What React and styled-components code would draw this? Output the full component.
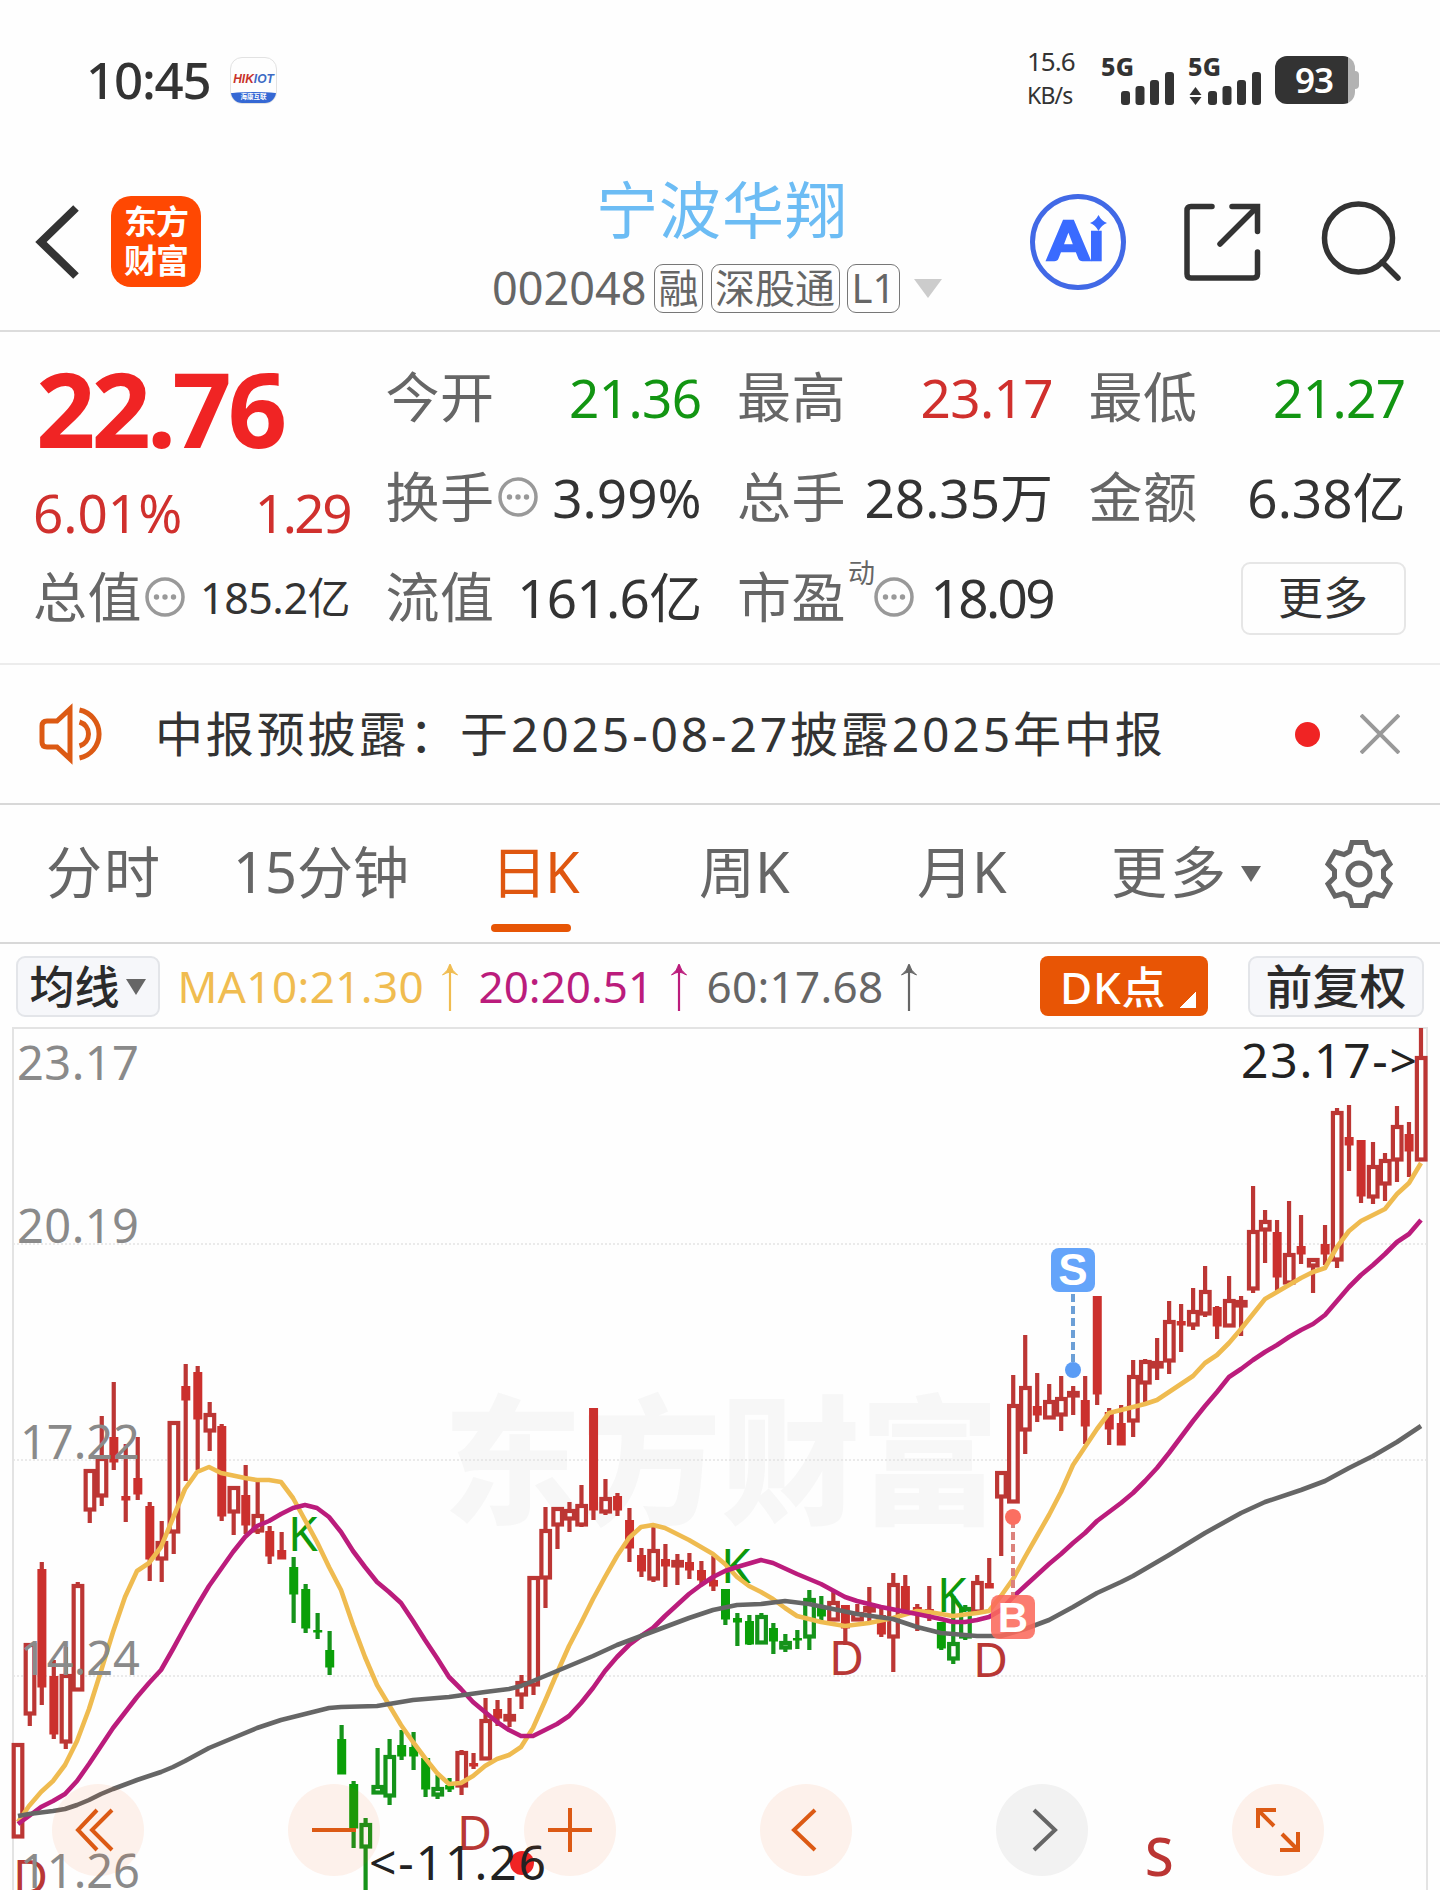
import styled, { createGlobalStyle } from "styled-components"

const GlobalStyle = createGlobalStyle`
    * {
        box-sizing: border-box;
    }

    body {
        margin: 0;
        background-color: #fefefe;
        font-family: "Noto Sans", "Noto Sans CJK SC", sans-serif;
        color: #333;
    }
`

const Page = styled.div`
    width: 1440px;
    height: 1890px;
    overflow: hidden;
    background-color: #fefefe;
`

/* ---------- status bar ---------- */

const StatusBar = styled.div`
    height: 160px;
    padding: 0 81px 0 86px;
    display: flex;
    align-items: center;
`

const Clock = styled.div`
    width: 144px;
    margin-top: -2px;
    font-size: 51px;
    font-weight: 500;
    letter-spacing: -1.2px;
    line-height: 60px;
`

const HikApp = styled.div`
    width: 47px;
    height: 47px;
    border: 1px solid #e2e2e2;
    border-radius: 12px;
    overflow: hidden;
    display: flex;
    flex-direction: column;
    justify-content: space-between;
    align-items: center;
`

const HikName = styled.div`
    margin-top: 13px;
    font-size: 12px;
    line-height: 16px;
    font-weight: 700;
    font-style: italic;
    font-family: "Liberation Sans", sans-serif;
    color: #c8322a;

    span {
        color: #3d6ac4;
    }
`

const HikFoot = styled.div`
    width: 60px;
    height: 11px;
    border-radius: 50% 50% 0 0 / 3px 3px 0 0;
    background-color: #3568d4;
    color: white;
    font-size: 6.5px;
    line-height: 10px;
    font-weight: 700;
    text-align: center;
`

const NetSpeed = styled.div`
    margin-left: auto;
    margin-top: -4px;
    width: 74px;
    font-size: 26px;
    line-height: 34px;
    letter-spacing: -1px;

    div + div {
        font-size: 23px;
        letter-spacing: -0.8px;
    }
`

const Signal = styled.svg`
    width: 76px;
    height: 56px;
    margin-right: ${({ $gap }) => $gap}px;
    overflow: visible;
`

const Battery = styled.div`
    width: 80px;
    height: 48px;
    border-radius: 12px;
    background: linear-gradient(to right, #333 73px, #b2b2b2 73px);
    color: white;
    font-size: 35px;
    font-weight: 600;
    line-height: 47px;
    padding-left: 20px;
    letter-spacing: -1px;
`

const BatteryTip = styled.div`
    width: 4px;
    height: 18px;
    border-radius: 0 4px 4px 0;
    background-color: #b2b2b2;
`

/* ---------- title bar ---------- */

const TitleBar = styled.header`
    height: 172px;
    border-bottom: 2px solid #dcdcdc;
    display: grid;
    grid-template-columns: 300px 1fr 440px;
`

const TitleSide = styled.div`
    padding-left: ${({ $left }) => $left}px;
    padding-top: 32px;
    display: flex;
    align-items: flex-start;

    svg {
        flex: none;
    }
`

const EastLogo = styled.div`
    width: 90px;
    height: 91px;
    margin: 4px 0 0 31px;
    border-radius: 20px;
    background-color: #ff4802;
    color: white;
    font-size: 33px;
    font-weight: 700;
    line-height: 39px;
    letter-spacing: -1px;
    text-align: center;
    padding-top: 6px;
`

const TitleMiddle = styled.div`
    display: flex;
    flex-direction: column;
    padding-left: 192px;
`

const StockName = styled.h1`
    margin: 13px 0 0 104px;
    font-size: 62px;
    line-height: 74px;
    font-weight: 400;
    letter-spacing: 1px;
    color: #6cbcf4;
`

const StockMeta = styled.div`
    margin-top: 16px;
    display: flex;
    align-items: center;
    color: #666;
    white-space: nowrap;
`

const Code = styled.div`
    width: 162px;
    font-size: 45px;
    line-height: 50px;
`

const Tag = styled.div`
    width: ${({ $width }) => $width}px;
    height: 49px;
    margin-right: 7.5px;
    border: 1.5px solid #777;
    border-radius: 9px;
    font-size: 40px;
    line-height: 46px;
    text-align: center;
`

const Triangle = styled.i`
    width: 0;
    height: 0;
    margin-left: ${({ $left }) => $left || 0}px;
    border-left: ${({ $w }) => $w / 2}px solid transparent;
    border-right: ${({ $w }) => $w / 2}px solid transparent;
    border-top: ${({ $h }) => $h}px solid ${({ $color }) => $color};
`

/* ---------- quote ---------- */

const Quote = styled.section`
    height: 333px;
    padding: 15px 31px 0 33px;
    border-bottom: 2px solid #ececec;
    display: grid;
    grid-template-columns: 317px 316px 316px 317px;
    grid-template-rows: 100px 100px 100px;
    column-gap: 35.5px;
`

const PriceCell = styled.div`
    grid-row: span 2;
    color: #d0302d;
`

const Price = styled.div`
    height: 120px;
    padding-left: 3px;
    font-size: 104px;
    line-height: 121px;
    font-weight: 700;
    letter-spacing: -4px;
    color: #f02424;
`

const PriceChange = styled.div`
    display: flex;
    justify-content: space-between;
    font-size: 53px;
    line-height: 92px;

    span + span {
        letter-spacing: -2.5px;
    }
`

const Cell = styled.div`
    display: flex;
    align-items: center;
    white-space: nowrap;
    line-height: 99px;
`

const Label = styled.div`
    font-size: 54px;
    letter-spacing: 0.5px;
    color: #666;
`

const Value = styled.div`
    margin-left: auto;
    font-size: ${({ $small }) => ($small ? 43 : 53)}px;
    letter-spacing: ${({ $ls }) => $ls || 0}px;
    color: ${({ $tone }) => ($tone === "up" ? "#d0302d" : $tone === "down" ? "#129512" : "#333")};
`

const Dynamic = styled.sup`
    align-self: flex-start;
    margin: 11px -4px 0 2px;
    font-size: 27px;
    line-height: 30px;
    color: #666;
`

const MoreButton = styled.button`
    margin-left: auto;
    margin-top: 3px;
    width: 165px;
    height: 73px;
    border: 2px solid #e6e6e6;
    border-radius: 9px;
    background: none;
    font-family: inherit;
    font-size: 45px;
    line-height: 60px;
    color: #333;
    padding: 0 0 2px;
`

const Dots = styled.svg`
    width: 40px;
    height: 40px;
    margin-left: 3px;
    flex: none;
`

/* ---------- notice ---------- */

const Notice = styled.section`
    height: 140px;
    padding: 0 40px 0 38px;
    border-bottom: 2px solid #d8d8d8;
    display: flex;
    align-items: center;
`

const NoticeText = styled.div`
    margin-left: 45px;
    font-size: 48px;
    line-height: 70px;
    letter-spacing: 2.85px;
    white-space: nowrap;
`

const RedDot = styled.div`
    width: 25px;
    height: 25px;
    margin-left: auto;
    margin-right: 40px;
    border-radius: 50%;
    background-color: #f02424;
`

/* ---------- tabs ---------- */

const Tabs = styled.nav`
    height: 139px;
    border-bottom: 2px solid #d8d8d8;
    display: grid;
    grid-template-columns: 233px 258px 208px 218px 194px 212px 1fr;
`

const Tab = styled.div`
    position: relative;
    padding-left: ${({ $left }) => $left || 0}px;
    display: flex;
    align-items: center;
    font-size: 56px;
    line-height: 130px;
    height: 132px;
    letter-spacing: ${({ $ls }) => $ls || 0}px;
    color: ${({ $active }) => ($active ? "#df5710" : "#666")};
    white-space: nowrap;

    &::after {
        content: "";
        display: ${({ $active }) => ($active ? "block" : "none")};
        position: absolute;
        left: 0;
        top: 119px;
        width: 80px;
        height: 8px;
        border-radius: 4px;
        background-color: #e75505;
    }

    i {
        margin-left: 12px;
        margin-top: 5px;
    }

    svg {
        margin-top: 6px;
    }
`

/* ---------- average line legend ---------- */

const Legend = styled.div`
    height: 83px;
    padding: 12px 16px 0 15.5px;
    display: flex;
    align-items: flex-start;
    white-space: nowrap;
`

const GreyButton = styled.div`
    width: ${({ $width }) => $width}px;
    height: 61px;
    border: 2px solid #e3e5e9;
    border-radius: 9px;
    background-color: #f6f7fa;
    font-size: ${({ $size }) => $size}px;
    font-weight: 500;
    line-height: 55px;
    color: #2b2b2b;
    display: flex;
    align-items: center;
    justify-content: center;

    i {
        margin-left: 6px;
    }
`

const Average = styled.div`
    width: ${({ $width }) => $width}px;
    display: flex;
    justify-content: space-between;
    margin-left: ${({ $left }) => $left}px;
    font-size: 44px;
    line-height: 61px;
    letter-spacing: ${({ $ls }) => $ls || 0}px;
    color: ${({ $color }) => $color};

    svg {
        margin-top: 6px;
    }
`

const DkButton = styled.div`
    width: 168px;
    height: 60px;
    margin-left: auto;
    margin-right: 40px;
    border-radius: 8px;
    background-color: #e85505;
    color: white;
    font-size: 44px;
    font-weight: 500;
    line-height: 58px;
    letter-spacing: 0.8px;
    padding-left: 20px;
    display: flex;
    align-items: flex-end;
`

const Corner = styled.i`
    width: 16px;
    height: 16px;
    margin: 0 0 8px 14px;
    background: linear-gradient(135deg, transparent 50%, white 50%);
`

/* ---------- chart ---------- */

const ChartBox = styled.div`
    position: relative;
    height: 863px;

    > svg {
        display: block;
    }
`

const ChartTools = styled.div`
    position: absolute;
    left: 52px;
    right: 116px;
    bottom: 14px;
    display: flex;
    justify-content: space-between;
`

const RoundTool = styled.div`
    width: 92px;
    height: 92px;
    border-radius: 50%;
    background-color: ${({ $grey }) => ($grey ? "#f2f2f2" : "rgba(243, 95, 10, 0.08)")};
    color: ${({ $grey }) => ($grey ? "#666" : "#dc5a14")};

    svg {
        display: block;
    }
`

// kind, body top, body bottom, high, low
// h: hollow, f: filled, capital letter: green
const candles = [
    ["h", 1743, 1838, 1743, 1838], ["h", 1643, 1715, 1643, 1726], ["f", 1569, 1687, 1562, 1705],
    ["f", 1676, 1734, 1660, 1739], ["h", 1674, 1743, 1647, 1749], ["h", 1584, 1691, 1582, 1691],
    ["h", 1469, 1511, 1469, 1523], ["h", 1457, 1497, 1416, 1506], ["f", 1437, 1462, 1382, 1470],
    ["f", 1496, 1500, 1444, 1522], ["f", 1478, 1494, 1437, 1500], ["f", 1506, 1559, 1502, 1581],
    ["h", 1541, 1560, 1521, 1582], ["h", 1421, 1533, 1421, 1554], ["f", 1386, 1400, 1364, 1481],
    ["f", 1372, 1419, 1366, 1470], ["h", 1413, 1432, 1402, 1451], ["f", 1426, 1516, 1424, 1521],
    ["h", 1486, 1513, 1486, 1535], ["f", 1495, 1525, 1465, 1534], ["h", 1514, 1532, 1482, 1534],
    ["f", 1531, 1556, 1526, 1564], ["f", 1550, 1559, 1532, 1559], ["F", 1567, 1594, 1557, 1623],
    ["F", 1589, 1628, 1584, 1633], ["F", 1630, 1632, 1613, 1639], ["F", 1650, 1667, 1631, 1675],
    ["F", 1739, 1774, 1725, 1774], ["F", 1784, 1828, 1781, 1848], ["H", 1823, 1848, 1818, 1892],
    ["H", 1785, 1794, 1748, 1794], ["H", 1755, 1797, 1739, 1805], ["F", 1745, 1756, 1730, 1760],
    ["F", 1747, 1756, 1732, 1770], ["F", 1758, 1789, 1758, 1797], ["H", 1787, 1796, 1775, 1799],
    ["F", 1785, 1789, 1778, 1792], ["h", 1751, 1787, 1750, 1795], ["f", 1763, 1766, 1753, 1769],
    ["h", 1719, 1760, 1698, 1760], ["f", 1709, 1718, 1700, 1726], ["h", 1714, 1721, 1698, 1727],
    ["h", 1681, 1696, 1675, 1709], ["h", 1576, 1686, 1576, 1695], ["h", 1529, 1579, 1507, 1608],
    ["h", 1507, 1526, 1507, 1549], ["h", 1509, 1520, 1502, 1532], ["h", 1504, 1526, 1485, 1527],
    ["f", 1408, 1510, 1408, 1520], ["h", 1497, 1513, 1479, 1515], ["f", 1496, 1510, 1493, 1516],
    ["f", 1520, 1548, 1508, 1562], ["f", 1555, 1571, 1548, 1577], ["h", 1549, 1580, 1527, 1582],
    ["f", 1559, 1566, 1544, 1587], ["h", 1560, 1567, 1554, 1585], ["f", 1562, 1570, 1553, 1579],
    ["f", 1570, 1580, 1561, 1585], ["f", 1580, 1586, 1556, 1591], ["F", 1589, 1619, 1589, 1625],
    ["F", 1618, 1622, 1613, 1646], ["F", 1621, 1644, 1615, 1645], ["H", 1615, 1644, 1613, 1644],
    ["F", 1628, 1641, 1623, 1654], ["H", 1641, 1649, 1634, 1652], ["F", 1638, 1640, 1630, 1649],
    ["H", 1598, 1638, 1590, 1650], ["F", 1606, 1616, 1596, 1621], ["h", 1601, 1621, 1592, 1621],
    ["f", 1605, 1628, 1605, 1645], ["h", 1612, 1621, 1604, 1621], ["h", 1606, 1612, 1587, 1624],
    ["f", 1615, 1634, 1609, 1637], ["h", 1583, 1638, 1573, 1672], ["f", 1586, 1610, 1575, 1610],
    ["f", 1607, 1610, 1604, 1631], ["f", 1609, 1611, 1586, 1621], ["F", 1622, 1648, 1622, 1650],
    ["H", 1642, 1660, 1596, 1664], ["H", 1607, 1638, 1605, 1640], ["h", 1581, 1613, 1575, 1613],
    ["f", 1583, 1588, 1558, 1588], ["h", 1471, 1498, 1471, 1556], ["h", 1404, 1503, 1375, 1503],
    ["h", 1386, 1431, 1335, 1454], ["f", 1406, 1415, 1373, 1422], ["h", 1400, 1419, 1384, 1419],
    ["h", 1397, 1416, 1376, 1431], ["h", 1391, 1397, 1386, 1415], ["f", 1400, 1426, 1376, 1444],
    ["f", 1296, 1394, 1296, 1405], ["f", 1412, 1429, 1408, 1445], ["f", 1423, 1445, 1405, 1445],
    ["h", 1375, 1422, 1360, 1437], ["h", 1360, 1384, 1359, 1403], ["h", 1361, 1368, 1338, 1380],
    ["h", 1320, 1362, 1301, 1374], ["f", 1321, 1325, 1304, 1352], ["h", 1310, 1326, 1288, 1330],
    ["h", 1290, 1315, 1266, 1317], ["f", 1307, 1326, 1306, 1339], ["h", 1299, 1327, 1276, 1327],
    ["h", 1300, 1307, 1296, 1336], ["h", 1230, 1290, 1186, 1293], ["h", 1220, 1231, 1210, 1263],
    ["f", 1232, 1277, 1220, 1291], ["h", 1253, 1284, 1201, 1284], ["f", 1246, 1254, 1215, 1264],
    ["h", 1258, 1267, 1258, 1293], ["f", 1244, 1254, 1225, 1265], ["h", 1111, 1261, 1108, 1268],
    ["f", 1137, 1145, 1105, 1171], ["f", 1140, 1196, 1140, 1203], ["h", 1165, 1198, 1142, 1204],
    ["h", 1159, 1185, 1153, 1201], ["h", 1125, 1161, 1106, 1182], ["f", 1134, 1151, 1122, 1177],
    ["h", 1056, 1161, 1028, 1161],
]

const ma10 = "18,1822 29,1806 41,1792 53,1781 65,1765 77,1741 89,1709 101,1671 113,1632 125,1597 137,1571 149,1563 161,1547 173,1518 185,1489 197,1472 209,1467 221,1473 245,1478 257,1480 269,1480 281,1482 293,1498 305,1520 317,1542 329,1567 341,1590 353,1625 365,1657 377,1685 389,1705 401,1725 413,1742 425,1758 437,1773 449,1784 461,1783 473,1776 485,1766 497,1759 509,1755 521,1747 533,1728 545,1701 557,1673 569,1646 581,1623 593,1599 605,1577 617,1556 629,1538 641,1527 653,1525 665,1528 677,1534 689,1540 701,1547 713,1554 725,1564 737,1577 749,1586 761,1592 773,1599 785,1608 797,1616 821,1622 845,1626 869,1623 893,1618 917,1611 929,1612 953,1616 977,1613 989,1611 1001,1596 1013,1579 1025,1557 1037,1536 1049,1515 1061,1492 1073,1465 1085,1447 1097,1429 1109,1413 1121,1410 1133,1407 1145,1404 1157,1400 1169,1392 1181,1384 1193,1376 1205,1363 1217,1355 1229,1343 1241,1329 1253,1314 1265,1299 1277,1292 1289,1285 1301,1278 1313,1272 1325,1268 1337,1247 1349,1231 1361,1221 1373,1215 1385,1209 1397,1194 1409,1183 1421,1163"
const ma20 = "18,1824 29,1816 41,1807 53,1801 65,1794 77,1781 89,1764 101,1746 113,1728 137,1697 149,1683 161,1670 173,1649 185,1627 197,1606 209,1586 221,1569 233,1552 245,1537 257,1526 269,1521 281,1514 293,1508 305,1505 317,1508 329,1517 341,1532 353,1551 365,1567 377,1582 389,1592 401,1603 413,1621 425,1640 437,1658 449,1677 461,1689 473,1702 485,1712 497,1722 509,1730 521,1736 533,1736 545,1730 557,1724 569,1716 581,1703 593,1688 605,1671 617,1657 629,1645 641,1636 653,1628 665,1616 677,1605 689,1594 701,1585 713,1577 725,1571 737,1567 761,1560 773,1563 797,1574 821,1584 845,1597 857,1601 881,1607 917,1614 941,1619 953,1622 965,1622 977,1620 989,1617 1001,1610 1013,1597 1025,1586 1037,1575 1049,1564 1061,1554 1073,1543 1085,1533 1097,1521 1109,1512 1121,1503 1133,1493 1145,1481 1157,1468 1169,1453 1181,1437 1193,1421 1205,1406 1217,1392 1229,1377 1241,1369 1253,1360 1265,1352 1277,1345 1289,1337 1301,1330 1313,1324 1325,1315 1337,1301 1349,1287 1361,1275 1373,1265 1385,1254 1397,1242 1409,1234 1421,1220"
const ma60 = "18,1816 29,1814 53,1811 65,1809 77,1805 89,1800 101,1794 113,1789 137,1780 161,1772 173,1767 185,1761 209,1748 233,1738 257,1728 281,1720 305,1714 329,1708 341,1707 377,1706 413,1700 449,1697 485,1692 509,1689 521,1686 533,1681 557,1671 593,1656 617,1645 641,1636 665,1627 689,1618 713,1610 737,1605 761,1604 785,1601 809,1604 833,1609 857,1614 893,1619 917,1627 941,1633 977,1636 1001,1636 1025,1629 1049,1620 1073,1607 1097,1593 1121,1582 1133,1576 1169,1555 1205,1533 1241,1513 1265,1502 1301,1490 1325,1481 1349,1468 1373,1456 1397,1442 1421,1426"

const axis = [["23.17", 1080, 17], ["20.19", 1243, 17], ["17.22", 1459, 20], ["14.24", 1675, 20], ["11.26", 1888, 20]]

const marks = [
    ["K", 288, 1551], ["K", 721, 1583], ["K", 937, 1612],
    ["D", 13, 1894], ["D", 457, 1850], ["D", 829, 1675], ["D", 973, 1677],
]

function Candle({ index, data }) {
    const [kind, top, bottom, high, low] = data
    const x = 17.8 + index * 11.993
    const green = kind === "F" || kind === "H"
    const fill = green ? "#0a9f08" : "#cb302d"
    const line = green ? "#15931a" : "#bc3634"
    const hollow = kind === "h" || kind === "H"

    return (
        <g>
            {high < top && <rect x={x - 2.1} y={high} width={4.2} height={top - high + 1} fill={line} />}
            {low > bottom && <rect x={x - 2.1} y={bottom - 1} width={4.2} height={low - bottom + 1} fill={line} />}
            {hollow
                ? <rect x={x - 4.1} y={top + 2} width={8.6} height={Math.max(bottom - top - 3.5, 2)} fill="#fefefe" stroke={line} strokeWidth={4.2} />
                : <rect x={x - 4.4} y={top} width={9} height={bottom - top + 0.5} fill={fill} />}
        </g>
    )
}

function Chart() {
    return (
        <svg width="1440" height="863" viewBox="0 1027 1440 863">
            <text x="443" y="1513" fontSize="139" fontWeight="900" fill="#f7f7f7" textLength="556">东方财富</text>
            <path d="M13 1890V1028H1427V1890" fill="none" stroke="#e3e3e3" strokeWidth="2" />
            {[1244, 1460, 1676].map((y) => (
                <path key={y} d={`M13 ${y}H1427`} stroke="#e4e4e4" strokeWidth="1.5" strokeDasharray="2 2" />
            ))}
            {candles.map((data, index) => <Candle key={index} index={index} data={data} />)}
            {marks.map(([letter, x, y]) => (
                <text key={x} x={x} y={y} fontSize="48" fill={letter === "K" ? "#0c980c" : "#b83735"}>{letter}</text>
            ))}
            <text x="1145" y="1876" fontSize="52" fontWeight="500" fill="#bb3533">S</text>
            <circle cx="522" cy="1863" r="12" fill="#f02424" />
            <g fill="none" strokeWidth="4.6" strokeLinejoin="round">
                <polyline points={ma10} stroke="#efbb50" />
                <polyline points={ma20} stroke="#bb1c7c" />
                <polyline points={ma60} stroke="#666" />
            </g>
            {axis.map(([label, y, x]) => (
                <text key={label} x={x} y={y} fontSize="47" fill="#8a8a8a" textLength={x > 17 ? 120 : 122}>{label}</text>
            ))}
            <text x="1241" y="1078" fontSize="48" fill="#222" textLength="176">{"23.17->"}</text>
            <text x="369" y="1880" fontSize="48" fill="#222" textLength="177">{"<-11.26"}</text>

            <path d="M1073 1294V1366" stroke="#6c9fd6" strokeWidth="4" strokeDasharray="8 4" />
            <circle cx="1073" cy="1370" r="8" fill="#5a9cf5" />
            <rect x="1051" y="1248" width="44" height="44" rx="8" fill="#64a4fa" />
            <text x="1073" y="1285" textAnchor="middle" fontSize="44" fontWeight="700" fontFamily="Liberation Sans" fill="white">S</text>

            <path d="M1013 1520V1596" stroke="#dc827c" strokeWidth="4" strokeDasharray="8 4" />
            <circle cx="1013" cy="1517" r="8" fill="#fb6f61" />
            <rect x="991" y="1595" width="44" height="44" rx="8" fill="#fb6a5c" fillOpacity="0.88" />
            <text x="1013" y="1632" textAnchor="middle" fontSize="42" fontWeight="700" fontFamily="Liberation Sans" fill="white">B</text>
        </svg>
    )
}

// every path is drawn around the middle of its round button
const tools = [
    { d: "M-1 -20L-20 0L-1 20M14 -20L-6 0L14 20" },
    { d: "M-22 0H22" },
    { d: "M-22 0H22M0 -22V22" },
    { d: "M9 -20L-12 0L9 20" },
    { d: "M-8 -20L13 0L-8 20", grey: true },
    { d: "M-20 -2V-20H-2M-20 -20L-4 -4M4 4L20 20M20 2V20H2" },
]

function InfoDots() {
    return (
        <Dots viewBox="0 0 40 40">
            <circle cx="20" cy="20" r="18" fill="none" stroke="#999" strokeWidth="3.5" />
            <circle cx="11.5" cy="20" r="2.7" fill="#999" />
            <circle cx="20" cy="20" r="2.7" fill="#999" />
            <circle cx="28.5" cy="20" r="2.7" fill="#999" />
        </Dots>
    )
}

function SignalIcon({ arrows, gap }) {
    return (
        <Signal viewBox="0 0 76 56" $gap={gap}>
            <text x="0" y="23.500" fontSize="25" fontWeight="800" fill="#333" textLength="33">5G</text>
            <g fill="#333">
                <rect x="20" y="39" width="9" height="14" rx="3" />
                <rect x="34.5" y="34" width="9" height="19" rx="3" />
                <rect x="49" y="28" width="9" height="25" rx="3" />
                <rect x="64" y="20" width="9" height="33" rx="3" />
                {arrows && <path d="M7.500 35L13.500 43H1.500ZM7.500 53L1.500 45H13.500Z" />}
            </g>
        </Signal>
    )
}

function UpArrow() {
    return (
        <svg width="20" height="50" viewBox="0 0 20 50" fill="none" stroke="currentColor" strokeWidth="2.200">
            <path d="M10 3V49" />
            <path d="M2.500 13Q8 9 10 2Q12 9 17.500 13Q13 10.500 10 10Q7 10.500 2.500 13Z" fill="currentColor" strokeWidth="1" />
        </svg>
    )
}

export default function App() {
    return (
        <Page>
            <GlobalStyle />
            <StatusBar>
                <Clock>10:45</Clock>
                <HikApp>
                    <HikName>HIK<span>IOT</span></HikName>
                    <HikFoot>海康互联</HikFoot>
                </HikApp>
                <NetSpeed>
                    <div>15.6</div>
                    <div>KB/s</div>
                </NetSpeed>
                <SignalIcon gap={11} />
                <SignalIcon gap={11} arrows />
                <Battery>93</Battery>
                <BatteryTip />
            </StatusBar>

            <TitleBar>
                <TitleSide $left={34}>
                    <svg width="46" height="100" viewBox="0 0 46 100" fill="none" stroke="#333" strokeWidth="8">
                        <path d="M42 16L7 50L42 84" />
                    </svg>
                    <EastLogo>东方<br />财富</EastLogo>
                </TitleSide>
                <TitleMiddle>
                    <StockName>宁波华翔</StockName>
                    <StockMeta>
                        <Code>002048</Code>
                        <Tag $width={49}>融</Tag>
                        <Tag $width={129}>深股通</Tag>
                        <Tag $width={53}>L1</Tag>
                        <Triangle $left={6} $w={29} $h={19} $color="#ccc" />
                    </StockMeta>
                </TitleMiddle>
                <TitleSide $left={28}>
                    <svg width="384" height="100" viewBox="1028 192 384 100" fill="none" stroke="#333" strokeWidth="5.500">
                        <circle cx="1078" cy="242" r="45.500" stroke="#4169e6" strokeWidth="5" />
                        <text x="1048" y="260" fontSize="54" fontWeight="900" fontFamily="Lato" fill="#3a6bff" stroke="#3a6bff" strokeWidth="2.500" textLength="56" lengthAdjust="spacingAndGlyphs">Aı</text>
                        <path d="M1098.500 215Q1101.500 221 1107 223Q1101.500 225 1098.500 231Q1095.500 225 1090 223Q1095.500 221 1098.500 215Z" fill="#3a6bff" stroke="none" />
                        <path d="M1212 206.500H1191Q1187 206.500 1187 210.500V274Q1187 278 1191 278H1253Q1257.500 278 1257.500 274V252M1232 206.500H1257.500V231.500M1257 207L1220 244" strokeLinecap="round" />
                        <circle cx="1358.500" cy="238" r="34" />
                        <path d="M1382 262L1398 278" strokeLinecap="round" />
                    </svg>
                </TitleSide>
            </TitleBar>

            <Quote>
                <PriceCell>
                    <Price>22.76</Price>
                    <PriceChange><span>6.01%</span><span>1.29</span></PriceChange>
                </PriceCell>
                <Cell><Label>今开</Label><Value $tone="down" $ls={-0.6}>21.36</Value></Cell>
                <Cell><Label>最高</Label><Value $tone="up" $ls={-0.6}>23.17</Value></Cell>
                <Cell><Label>最低</Label><Value $tone="down" $ls={-0.6}>21.27</Value></Cell>
                <Cell><Label>换手</Label><InfoDots /><Value>3.99%</Value></Cell>
                <Cell><Label>总手</Label><Value>28.35万</Value></Cell>
                <Cell><Label>金额</Label><Value>6.38亿</Value></Cell>
                <Cell><Label>总值</Label><InfoDots /><Value $small $ls={-0.5}>185.2亿</Value></Cell>
                <Cell><Label>流值</Label><Value $ls={-0.7}>161.6亿</Value></Cell>
                <Cell><Label>市盈</Label><Dynamic>动</Dynamic><InfoDots /><Value $ls={-2.6}>18.09</Value></Cell>
                <Cell><MoreButton>更多</MoreButton></Cell>
            </Quote>

            <Notice>
                <svg width="72" height="64" viewBox="0 0 72 64" fill="none" stroke="#dc5a14" strokeWidth="5">
                    <path d="M32 7V57L19 45H9Q4 45 4 40V24Q4 19 9 19H19Z" />
                    <path d="M41.500 8A24.500 24.500 0 0 1 41.500 56M41.500 20A12.500 12.500 0 0 1 41.500 44" />
                </svg>
                <NoticeText>中报预披露：于2025-08-27披露2025年中报</NoticeText>
                <RedDot />
                <svg width="40" height="40" viewBox="0 0 40 40" stroke="#999" strokeWidth="4">
                    <path d="M1 1L39 39M39 1L1 39" />
                </svg>
            </Notice>

            <Tabs>
                <Tab $left={46} $ls={2}>分时</Tab>
                <Tab>15分钟</Tab>
                <Tab $active $ls={-2}>日K</Tab>
                <Tab>周K</Tab>
                <Tab $ls={-1}>月K</Tab>
                <Tab $ls={3}>更多<Triangle $w={20} $h={16} $color="#666" /></Tab>
                <Tab>
                    <svg width="72" height="72" viewBox="-36 -36 72 72" fill="none" stroke="#666" strokeWidth="5">
                        <path d="M-7 -31.500H7L9.500 -22.500L15 -19.500L24 -22L31 -10L24.500 -3.500V3.500L31 10L24 22L15 19.500L9.500 22.500L7 31.500H-7L-9.500 22.500L-15 19.500L-24 22L-31 10L-24.500 3.500V-3.500L-31 -10L-24 -22L-15 -19.500L-9.500 -22.500Z" />
                        <circle r="11" />
                    </svg>
                </Tab>
            </Tabs>

            <Legend>
                <GreyButton $width={144} $size={45}>均线<Triangle $w={20} $h={16} $color="#666" /></GreyButton>
                <Average $left={18} $width={282} $ls={0.4} $color="#f0bc50">MA10:21.30<UpArrow /></Average>
                <Average $left={19} $width={210} $color="#bb1c7c">20:20.51<UpArrow /></Average>
                <Average $left={18} $width={212} $ls={0.3} $color="#666">60:17.68<UpArrow /></Average>
                <DkButton>DK点<Corner /></DkButton>
                <GreyButton $width={176} $size={47}>前复权</GreyButton>
            </Legend>

            <ChartBox>
                <Chart />
                <ChartTools>
                    {tools.map(({ d, grey }) => (
                        <RoundTool key={d} $grey={grey}>
                            <svg width="92" height="92" viewBox="-46 -46 92 92" fill="none" stroke="currentColor" strokeWidth="4">
                                <path d={d} />
                            </svg>
                        </RoundTool>
                    ))}
                </ChartTools>
            </ChartBox>
        </Page>
    )
}
